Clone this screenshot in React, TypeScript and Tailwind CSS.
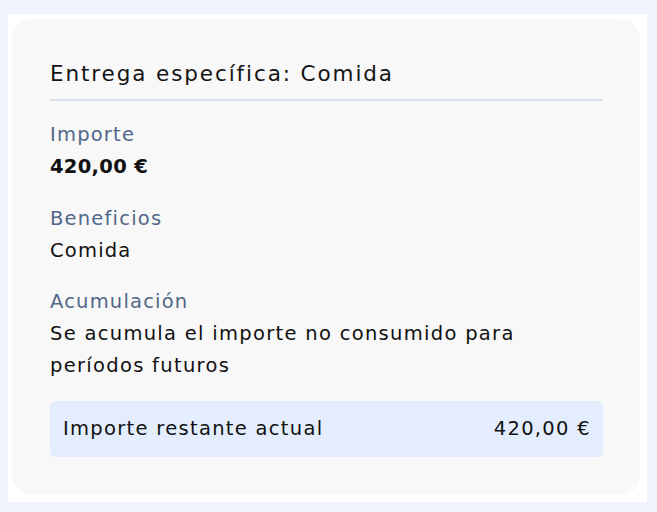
export default function App() {
  const font = { fontFamily: '"DejaVu Sans", "Noto Sans", sans-serif' };
  return (
    <div className="h-[512px] w-[657px] bg-[#f0f4fd] pl-[8px] pt-[14px]" style={font}>
      <div className="h-[488px] w-[639px] bg-white pb-[7px] pl-[4px] pr-[7px] pt-[5px]">
        <div className="h-[476px] w-[628px] rounded-[20px] bg-[#f8f8f8] pl-[38px] pr-[37px] pt-[41px]">
          <div className="border-b-2 border-[#d8e0ea] pb-[11px] text-[21.5px] leading-[28px] tracking-[1.9px] text-[#141414]">
            Entrega específica: Comida
          </div>
          <div className="mt-[18px] text-[19.5px] leading-[32px] tracking-[1.2px]">
            <div className="text-[#52678a]">Importe</div>
            <div className="font-bold tracking-[0.3px] text-[#111]">420,00 €</div>
          </div>
          <div className="mt-[20px] text-[19.5px] leading-[32px] tracking-[1.2px]">
            <div className="text-[#52678a]">Beneficios</div>
            <div className="text-[#111]">Comida</div>
          </div>
          <div className="mt-[19px] text-[19.5px] leading-[32px] tracking-[1.2px]">
            <div className="text-[#52678a]">Acumulación</div>
            <div className="tracking-[1.3px] text-[#111]">Se acumula el importe no consumido para períodos futuros</div>
          </div>
          <div className="mt-[19px] flex h-[56px] items-center justify-between rounded-[6px] bg-[#e3edfd] pl-[13px] pr-[14px] text-[19.5px] tracking-[1.3px] text-[#111]">
            <span>Importe restante actual</span>
            <span className="mr-[-2px]">420,00 €</span>
          </div>
        </div>
      </div>
    </div>
  );
}
